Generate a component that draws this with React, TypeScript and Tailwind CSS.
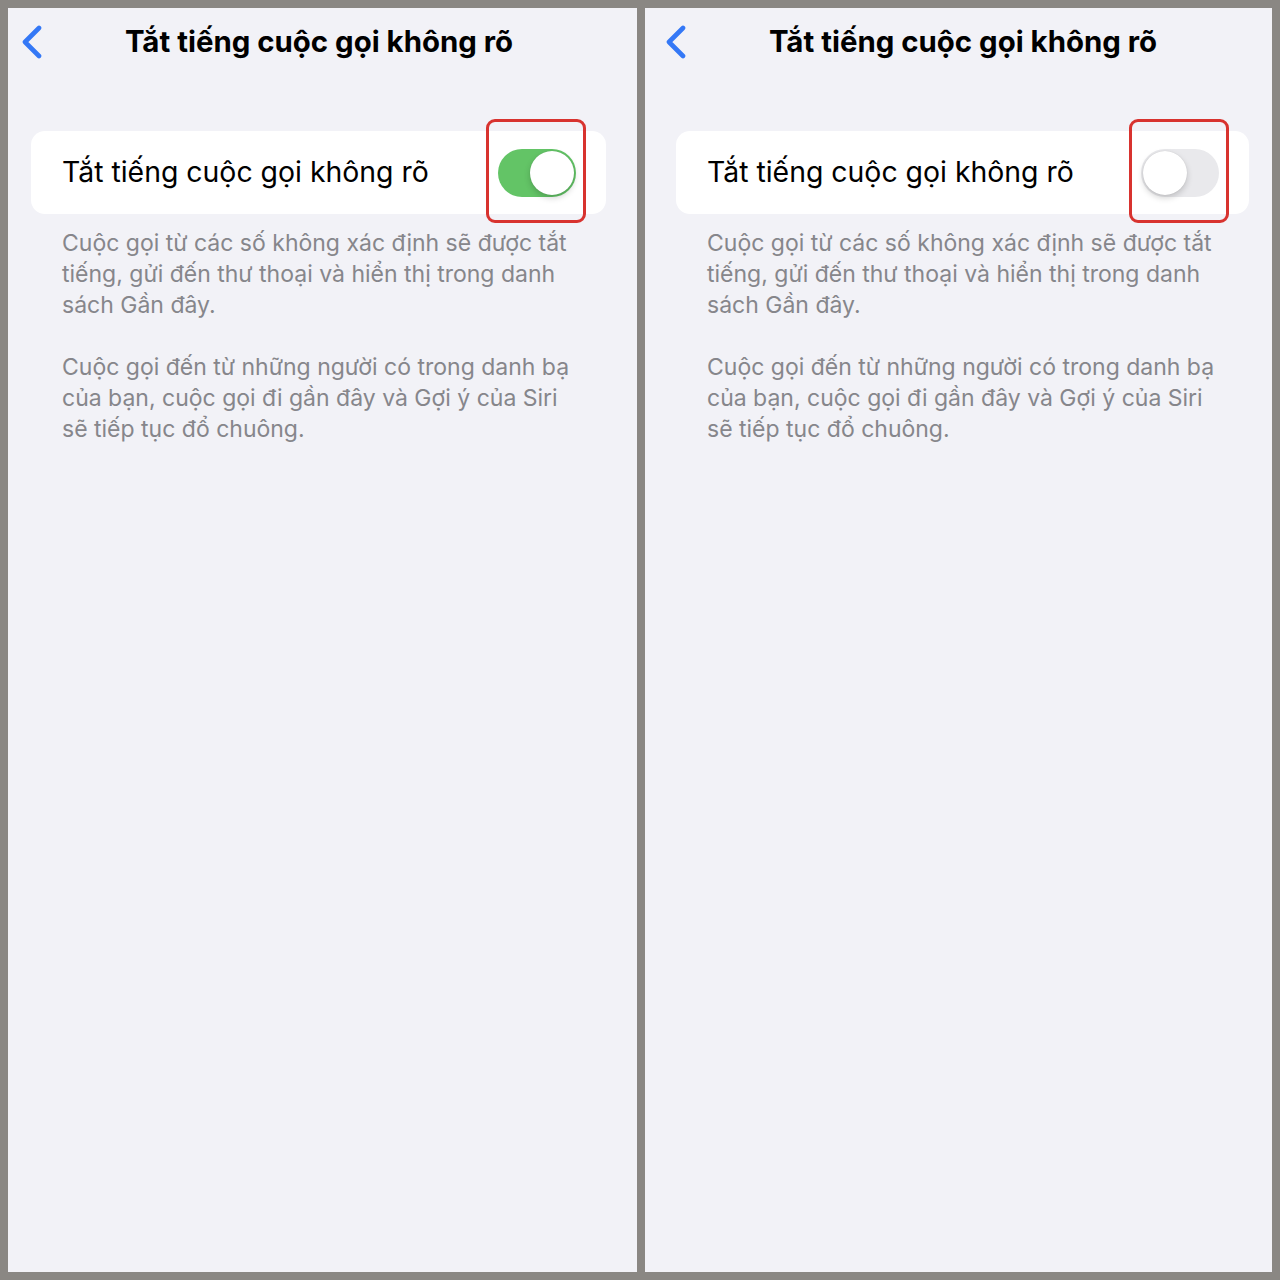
import { ReactNode } from 'react';

const font = { fontFamily: 'Inter, "Noto Sans", sans-serif' };

const Chevron = () => (
  <svg width="22" height="34" viewBox="0 0 22 34" fill="none">
    <path d="M18 3 L4 17 L18 31" stroke="#3478f6" strokeWidth="4.6" strokeLinecap="round" strokeLinejoin="round" />
  </svg>
);

const Toggle = ({ on }: { on: boolean }) => (
  <div className="relative shrink-0">
    <div
      className={
        on
          ? 'w-[78px] h-[48px] rounded-full bg-[#63c466] flex items-center justify-end p-[2px]'
          : 'w-[78px] h-[48px] rounded-full bg-[#e9e9ec] flex items-center justify-start p-[2px]'
      }
    >
      <div className="w-[44px] h-[44px] rounded-full bg-white shadow-[0_3px_6px_rgba(0,0,0,0.18),0_0_1px_rgba(0,0,0,0.15)]" />
    </div>
    {/* annotation box */}
    <div className="absolute -left-[12px] -right-[10px] -top-[30px] -bottom-[26px] border-[3px] border-[#d8332f] rounded-[9px]" />
  </div>
);

const Panel = ({ on, right }: { on: boolean; right?: boolean }) => {
  const headerPad = right ? 'pl-[20px] pr-[11px]' : 'pl-[13px] pr-[20px]';
  const bodyPad = right ? 'pl-[31px] pr-[23px]' : 'pl-[23px] pr-[31px]';
  return (
    <div className="bg-[#f2f2f7] h-full" style={font}>
      <div className={`grid grid-cols-[1fr_auto_1fr] items-center h-[68px] ${headerPad}`}>
        <div className="flex items-center">
          <Chevron />
        </div>
        <h1 className="text-[29.4px] font-bold text-black">Tắt tiếng cuộc gọi không rõ</h1>
        <div />
      </div>
      <div className={`mt-[55px] ${bodyPad}`}>
        <div className="bg-white rounded-[14px] h-[83px] flex items-center justify-between pl-[31px] pr-[30px]">
          <span className="text-[28.4px] text-black">Tắt tiếng cuộc gọi không rõ</span>
          <Toggle on={on} />
        </div>
        <div className="pl-[31px] pr-[26px] pt-[14px] text-[23px] leading-[31px] text-[#86868b] space-y-[31px]">
          <Para>Cuộc gọi từ các số không xác định sẽ được tắt tiếng, gửi đến thư thoại và hiển thị trong danh sách Gần đây.</Para>
          <Para>Cuộc gọi đến từ những người có trong danh bạ của bạn, cuộc gọi đi gần đây và Gợi ý của Siri sẽ tiếp tục đổ chuông.</Para>
        </div>
      </div>
    </div>
  );
};

const Para = ({ children }: { children: ReactNode }) => <p>{children}</p>;

export default function App() {
  return (
    <div className="w-[1280px] h-[1280px] bg-[#8a8783] p-2 grid grid-cols-[629px_627px] gap-2">
      <Panel on />
      <Panel on={false} right />
    </div>
  );
}
